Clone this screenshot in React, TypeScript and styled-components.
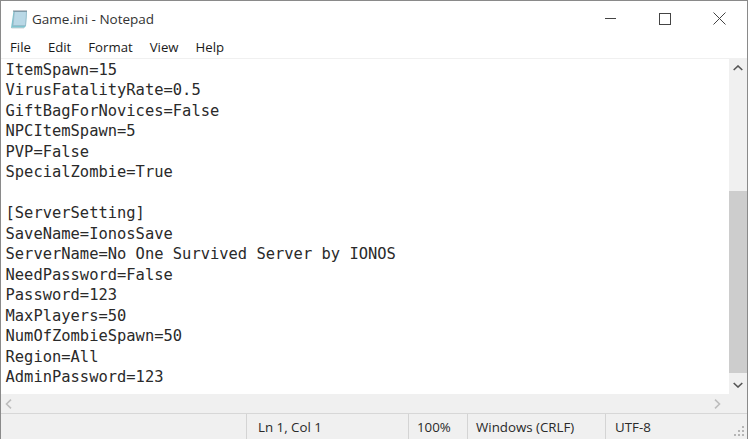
import styled, { createGlobalStyle } from "styled-components";

const GlobalStyle = createGlobalStyle`
  html, body {
    margin: 0;
    padding: 0;
    background: #fff;
  }
  #root {
    width: 750px;
    height: 439px;
    overflow: hidden;
  }
`;

const Window = styled.div`
  box-sizing: border-box;
  width: 748px;
  height: 439px;
  display: flex;
  flex-direction: column;
  background: #fff;
  border-top: 1px solid #8a8a8a;
  border-left: 1px solid #8a8a8a;
  border-right: 1px solid #8a8a8a;
  font-family: "Open Sans", "Noto Sans", sans-serif;
  color: #1a1a1a;
`;

const TitleBar = styled.div`
  height: 35px;
  display: flex;
  align-items: center;
  padding-left: 9px;
  flex-shrink: 0;
`;

const Title = styled.span`
  font-size: 13.5px;
  margin-left: 4px;
  color: #333;
`;

const Controls = styled.div`
  margin-left: auto;
  display: flex;
  align-items: center;
`;

const ControlButton = styled.div`
  width: 54.5px;
  height: 35px;
  display: flex;
  align-items: center;
  justify-content: center;
`;

const MenuBar = styled.div`
  height: 22px;
  display: flex;
  align-items: center;
  gap: 17px;
  padding-left: 9px;
  font-size: 13.2px;
  flex-shrink: 0;
  border-bottom: 1px solid #f0f0f0;
`;

const Middle = styled.div`
  flex: 1;
  min-height: 0;
  display: flex;
`;

const Editor = styled.pre`
  flex: 1;
  margin: 0;
  padding: 0.5px 0 0 4.5px;
  overflow: hidden;
  font-family: "DejaVu Sans Mono", monospace;
  font-size: 15.45px;
  line-height: 20.53px;
  color: #2a2a2a;
`;

const VScroll = styled.div`
  width: 18px;
  background: #f0f0f0;
  display: flex;
  flex-direction: column;
`;

const ScrollArrow = styled.div`
  height: 18px;
  display: flex;
  align-items: center;
  justify-content: center;
  flex-shrink: 0;
`;

const VTrack = styled.div`
  flex: 1;
  display: flex;
  flex-direction: column;
  justify-content: flex-end;
`;

const VThumb = styled.div`
  height: 182px;
  margin-bottom: 3px;
  background: #cdcdcd;
`;

const HScroll = styled.div`
  height: 19px;
  flex-shrink: 0;
  background: #f0f0f0;
  display: flex;
  align-items: center;
  justify-content: space-between;
  padding: 0 26px 0 4px;
`;

const StatusBar = styled.div`
  height: 25px;
  flex-shrink: 0;
  background: #f0f0f0;
  border-top: 1px solid #d7d7d7;
  display: flex;
  font-size: 13.3px;
`;

const StatusCell = styled.div<{ $width: number; $pad: number }>`
  box-sizing: border-box;
  width: ${(p) => p.$width}px;
  display: flex;
  align-items: center;
  padding-left: ${(p) => p.$pad}px;
  border-left: 1px solid #d4d4d4;
  color: #2a2a2a;
  &:first-child {
    border-left: none;
  }
`;

const Grip = styled.svg`
  margin: auto 2px 2px auto;
`;

const NotepadIcon = () => (
  <svg width="18" height="20" viewBox="0 0 18 20">
    <path d="M3.5 2 L17 2 L16 17 L14 19 L1 19 Z" fill="#7fc4cf" />
    <path d="M4.5 2.5 L16.5 2.5 L15.5 16.5 L3 16.5 Z" fill="#b9d8e6" stroke="#9ab4c2" strokeWidth="0.6" />
    <path d="M3.5 2 L17 2" stroke="#56646f" strokeWidth="1.6" strokeDasharray="1 1" />
    <path d="M1.5 19 L14 19" stroke="#c9d4d8" strokeWidth="1" />
  </svg>
);

const lines = `ItemSpawn=15
VirusFatalityRate=0.5
GiftBagForNovices=False
NPCItemSpawn=5
PVP=False
SpecialZombie=True

[ServerSetting]
SaveName=IonosSave
ServerName=No One Survived Server by IONOS
NeedPassword=False
Password=123
MaxPlayers=50
NumOfZombieSpawn=50
Region=All
AdminPassword=123`;

export default function App() {
  return (
    <>
      <GlobalStyle />
      <Window>
        <TitleBar>
          <NotepadIcon />
          <Title>Game.ini - Notepad</Title>
          <Controls>
            <ControlButton>
              <svg width="11" height="11" viewBox="0 0 11 11">
                <path d="M0 5.5H11" stroke="#444" strokeWidth="1" />
              </svg>
            </ControlButton>
            <ControlButton>
              <svg width="12" height="12" viewBox="0 0 12 12">
                <rect x="0.5" y="0.5" width="11" height="11" fill="none" stroke="#444" />
              </svg>
            </ControlButton>
            <ControlButton>
              <svg width="13" height="13" viewBox="0 0 13 13">
                <path d="M0.5 0.5L12.5 12.5M12.5 0.5L0.5 12.5" stroke="#444" strokeWidth="1" />
              </svg>
            </ControlButton>
          </Controls>
        </TitleBar>
        <MenuBar>
          <span>File</span>
          <span>Edit</span>
          <span>Format</span>
          <span>View</span>
          <span>Help</span>
        </MenuBar>
        <Middle>
          <Editor>{lines}</Editor>
          <VScroll>
            <ScrollArrow>
              <svg width="10" height="6" viewBox="0 0 10 6">
                <path d="M0.7 5L5 1L9.3 5" fill="none" stroke="#555" strokeWidth="1.6" />
              </svg>
            </ScrollArrow>
            <VTrack>
              <VThumb />
            </VTrack>
            <ScrollArrow>
              <svg width="10" height="6" viewBox="0 0 10 6">
                <path d="M0.7 1L5 5L9.3 1" fill="none" stroke="#555" strokeWidth="1.6" />
              </svg>
            </ScrollArrow>
          </VScroll>
        </Middle>
        <HScroll>
          <svg width="7" height="10" viewBox="0 0 7 10">
            <path d="M6 0.7L1.5 5L6 9.3" fill="none" stroke="#bdbdbd" strokeWidth="1.6" />
          </svg>
          <svg width="7" height="10" viewBox="0 0 7 10">
            <path d="M1 0.7L5.5 5L1 9.3" fill="none" stroke="#bdbdbd" strokeWidth="1.6" />
          </svg>
        </HScroll>
        <StatusBar>
          <StatusCell $width={245} $pad={0} />
          <StatusCell $width={162} $pad={11}>Ln 1, Col 1</StatusCell>
          <StatusCell $width={59} $pad={8}>100%</StatusCell>
          <StatusCell $width={138} $pad={8}>Windows (CRLF)</StatusCell>
          <StatusCell $width={142} $pad={9}>
            UTF-8
            <Grip width="11" height="11" viewBox="0 0 11 11">
              <g fill="#b5b5b5">
                <rect x="8" y="0" width="2" height="2" />
                <rect x="8" y="4" width="2" height="2" />
                <rect x="4" y="4" width="2" height="2" />
                <rect x="8" y="8" width="2" height="2" />
                <rect x="4" y="8" width="2" height="2" />
                <rect x="0" y="8" width="2" height="2" />
              </g>
            </Grip>
          </StatusCell>
        </StatusBar>
      </Window>
    </>
  );
}
